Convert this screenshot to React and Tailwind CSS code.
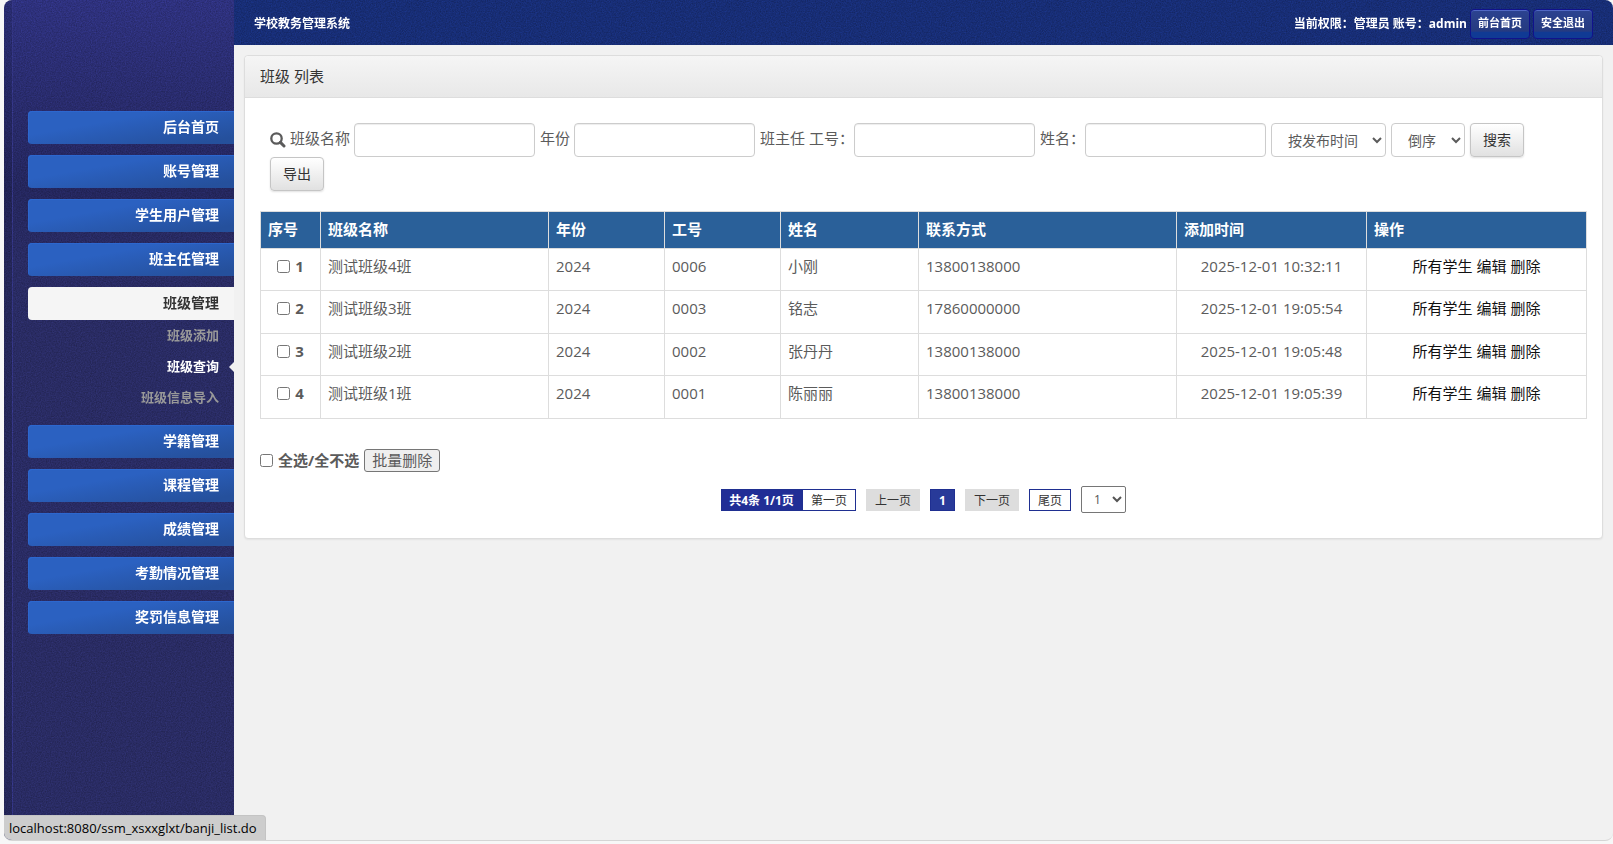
import React, { useState } from 'react';
import clsx from 'clsx';

const menu = [
  { title: '后台首页' },
  { title: '账号管理' },
  { title: '学生用户管理' },
  { title: '班主任管理' },
  { title: '班级管理', children: ['班级添加', '班级查询', '班级信息导入'] },
  { title: '学籍管理' },
  { title: '课程管理' },
  { title: '成绩管理' },
  { title: '考勤情况管理' },
  { title: '奖罚信息管理' },
];

const columns = [
  { title: '序号', width: 'w-[60px]' },
  { title: '班级名称', width: 'w-[228px]' },
  { title: '年份', width: 'w-[116px]' },
  { title: '工号', width: 'w-[116px]' },
  { title: '姓名', width: 'w-[138px]' },
  { title: '联系方式', width: 'w-[258px]' },
  { title: '添加时间', width: 'w-[190px]' },
  { title: '操作', width: 'w-[220px]' },
];

const classes = [
  { id: 1, name: '测试班级4班', year: '2024', no: '0006', teacher: '小刚', phone: '13800138000', time: '2025-12-01 10:32:11' },
  { id: 2, name: '测试班级3班', year: '2024', no: '0003', teacher: '铭志', phone: '17860000000', time: '2025-12-01 19:05:54' },
  { id: 3, name: '测试班级2班', year: '2024', no: '0002', teacher: '张丹丹', phone: '13800138000', time: '2025-12-01 19:05:48' },
  { id: 4, name: '测试班级1班', year: '2024', no: '0001', teacher: '陈丽丽', phone: '13800138000', time: '2025-12-01 19:05:39' },
];

// Fine grain laid over the dark blue areas
function Grain({ id }) {
  return (
    <svg className="pointer-events-none absolute inset-0 h-full w-full opacity-25 mix-blend-overlay" aria-hidden="true">
      <filter id={id} x="0" y="0" width="100%" height="100%" colorInterpolationFilters="sRGB">
        <feTurbulence type="fractalNoise" baseFrequency="0.8" numOctaves="2" />
        <feColorMatrix values="1 0 0 0 0  1 0 0 0 0  1 0 0 0 0  0 0 0 0 1" />
      </filter>
      <rect width="100%" height="100%" filter={`url(#${id})`} />
    </svg>
  );
}

function SearchIcon() {
  return (
    <svg width="16" height="16" viewBox="0 0 16 16" fill="none" stroke="currentColor" aria-hidden="true">
      <circle cx="6.5" cy="6.5" r="5.2" strokeWidth="2.3" />
      <path d="M10.4 10.4l3.6 3.6" strokeWidth="3" strokeLinecap="round" />
    </svg>
  );
}

function Sidebar() {
  return (
    <aside className="relative isolate flex w-[230px] shrink-0 bg-linear-to-b from-[#2e317e] from-0% via-[#24265d] via-[190px] to-[#292b63] to-[260px]">
      <Grain id="grain-side" />
      <div className="box-content w-2 shrink-0 border-r border-[#333584] bg-black/10" />
      <nav className="relative flex-1 pl-[15px] pt-[111px]">
        <ul className="flex flex-col gap-[11px]">
          {menu.map((item) => (
            <li key={item.title}>
              <a
                href="#"
                className={clsx(
                  'block h-[33px] rounded-l pr-[15px] text-right text-sm leading-[32px] font-bold',
                  item.children
                    ? 'bg-[#f5f5f5] text-[#333333]'
                    : 'bg-linear-170 from-[#2b61c1] from-35% to-[#25509c] to-90% text-white shadow-[inset_1px_1px_0_#2c67cf]'
                )}
              >
                {item.title}
              </a>
              {item.children && (
                <ul className="pb-px text-right text-[13px] font-bold">
                  {item.children.map((child) => (
                    <li key={child} className="flex h-[31px] items-center justify-end">
                      <a href="#" className={child === '班级查询' ? 'text-white' : 'text-[#999999]'}>
                        {child}
                      </a>
                      <span className="flex w-[15px] justify-end">
                        {child === '班级查询' && (
                          <svg width="5" height="10" viewBox="0 0 5 10" fill="#f1f1f1" aria-hidden="true">
                            <path d="M5 0v10L0 5z" />
                          </svg>
                        )}
                      </span>
                    </li>
                  ))}
                </ul>
              )}
            </li>
          ))}
        </ul>
      </nav>
    </aside>
  );
}

function Header() {
  const button =
    'h-[30px] w-[60px] rounded border border-[#10128c] bg-linear-to-b from-[#2c4391] via-[#253a80] via-75% to-[#103a94] to-80% text-[11px] font-bold shadow-[inset_0_1px_0_#5068c4]';
  return (
    <header className="relative isolate flex h-[45px] items-center bg-[#172d75] px-5 pt-[2px] text-xs font-bold text-white">
      <Grain id="grain-head" />
      <h1 className="relative">学校教务管理系统</h1>
      <div className="relative ml-auto flex items-center gap-[3px]">
        <span>当前权限：管理员 账号：admin</span>
        <button className={button}>前台首页</button>
        <button className={button}>安全退出</button>
      </div>
    </header>
  );
}

const field = 'h-[34px] rounded border border-[#cccccc] bg-white';
const button =
  'h-[34px] w-[54px] rounded border border-[#c5c5c5] bg-linear-to-b from-white to-[#e1e1e1] text-sm text-[#333333] shadow-[0_1px_2px_rgba(0,0,0,0.12)]';

function Field({ label, tight, icon }) {
  return (
    <label className={clsx('flex items-center', tight ? 'gap-0' : 'gap-1')}>
      {icon}
      <span className="pb-[3px]">{label}</span>
      <input type="text" className={clsx(field, 'w-[181px] px-3 shadow-[inset_0_1px_1px_rgba(0,0,0,0.075)]')} />
    </label>
  );
}

function SearchForm() {
  return (
    <form className="flex flex-wrap items-center gap-x-[5px] px-[10px]" onSubmit={(e) => e.preventDefault()}>
      <Field label="班级名称" icon={<SearchIcon />} />
      <Field label="年份" />
      <Field label="班主任 工号：" tight />
      <Field label="姓名：" tight />
      <select aria-label="排序字段" className={clsx(field, 'w-[115px] pl-3 text-sm')}>
        <option>按发布时间</option>
      </select>
      <select aria-label="排序方向" className={clsx(field, 'w-[74px] pl-3 text-sm')}>
        <option>倒序</option>
      </select>
      <button type="submit" className={button}>搜索</button>
      <button type="button" className={button}>导出</button>
    </form>
  );
}

function ClassTable({ checked, onToggle }) {
  return (
    <table className="mt-5 w-full table-fixed border-collapse border border-[#dddddd]">
      <thead>
        <tr className="h-[37px] bg-[#2a6099] text-left text-white">
          {columns.map((col) => (
            <th key={col.title} className={clsx(col.width, 'border border-[#dddddd] px-[7px] pb-[2px] font-bold')}>
              {col.title}
            </th>
          ))}
        </tr>
      </thead>
      <tbody>
        {classes.map((row) => (
          <tr key={row.id} className="h-[42px] align-top leading-[21px] even:h-[43px] [&>td]:border [&>td]:border-[#dddddd] [&>td]:px-[7px] [&>td]:pt-[7px]">
            <td>
              <label className="flex items-center justify-center gap-[5px] font-bold">
                <input type="checkbox" className="size-[13px]" checked={checked.includes(row.id)} onChange={() => onToggle(row.id)} />
                {row.id}
              </label>
            </td>
            <td>{row.name}</td>
            <td>{row.year}</td>
            <td>{row.no}</td>
            <td>{row.teacher}</td>
            <td>{row.phone}</td>
            <td className="text-center">{row.time}</td>
            <td className="text-[#111111]">
              <div className="flex justify-center gap-1">
                <a href="#">所有学生</a>
                <a href="#">编辑</a>
                <a href="#">删除</a>
              </div>
            </td>
          </tr>
        ))}
      </tbody>
    </table>
  );
}

function Pagination() {
  const page = 'flex h-[22px] items-center justify-center border pt-[2px]';
  return (
    <div className="mt-[14px] flex items-center justify-center gap-[10px] text-xs text-[#333333]">
      <div className="flex">
        <span className={clsx(page, 'w-[81px] border-[#1f2f91] bg-[#212e96] font-bold text-white')}>共4条 1/1页</span>
        <a href="#" className={clsx(page, 'w-[54px] border-[#1f2f91]')}>第一页</a>
      </div>
      <a href="#" className={clsx(page, 'w-[54px] border-[#dddddd] bg-[#dddddd]')}>上一页</a>
      <span className={clsx(page, 'w-[25px] border-[#1f2f91] bg-[#283a99] font-bold text-white')}>1</span>
      <a href="#" className={clsx(page, 'w-[54px] border-[#dddddd] bg-[#dddddd]')}>下一页</a>
      <a href="#" className={clsx(page, 'w-[42px] border-[#1f2f91]')}>尾页</a>
      <select aria-label="页码" className="h-[27px] w-[45px] rounded-xs border border-[#767676] bg-white pl-2 text-[#555555]">
        <option>1</option>
      </select>
    </div>
  );
}

export default function App() {
  const [checked, setChecked] = useState([]);

  const toggle = (id) => {
    setChecked(checked.includes(id) ? checked.filter((c) => c !== id) : [...checked, id]);
  };

  const toggleAll = (e) => {
    setChecked(e.target.checked ? classes.map((c) => c.id) : []);
  };

  return (
    <div className="flex min-h-screen flex-col bg-[#f7f7f7] pb-[3px] pl-1 font-['Open_Sans','Noto_Sans_CJK_SC',sans-serif] text-[15px] text-[#5b5b5b]">
      <div className="relative flex flex-1 overflow-hidden rounded-lg border-b border-[#d5d5d5] bg-[#f1f1f1]">
        <Sidebar />
        <div className="min-w-0 flex-1">
          <Header />
          <main className="px-[10px] pt-[10px]">
            <section className="rounded border border-[#dddddd] bg-white shadow-[0_1px_2px_rgba(0,0,0,0.06)]">
              <h2 className="flex h-[42px] items-center rounded-t border-b border-[#dddddd] bg-linear-to-b from-[#f5f5f5] to-[#e8e8e8] px-[15px] text-[#333333]">
                班级 列表
              </h2>
              <div className="px-[15px] py-[25px]">
                <SearchForm />
                <ClassTable checked={checked} onToggle={toggle} />
                <div className="mt-[30px] flex items-center gap-[5px]">
                  <label className="flex items-center gap-[5px] font-bold">
                    <input type="checkbox" className="size-[13px]" checked={checked.length === classes.length} onChange={toggleAll} />
                    全选/全不选
                  </label>
                  <button className="h-[23px] w-[76px] rounded-[3px] border border-[#767676] bg-[#efefef] leading-[21px]">批量删除</button>
                </div>
                <Pagination />
              </div>
            </section>
          </main>
        </div>
        <div className="absolute bottom-0 left-0 h-[25px] w-[262px] rounded-tr border-r border-t border-[#c4c4c4] bg-[#cdcdcd] pl-[5px] text-[13px] leading-[25px] whitespace-nowrap text-black">
          localhost:8080/ssm_xsxxglxt/banji_list.do
        </div>
      </div>
    </div>
  );
}
